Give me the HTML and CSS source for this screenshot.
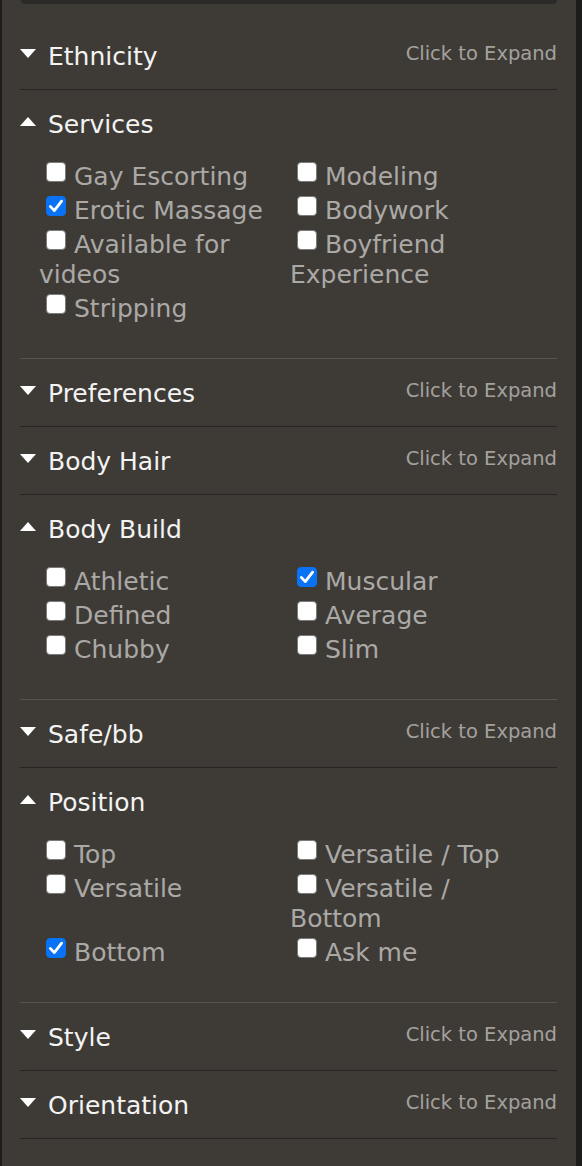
FILE: index.html
```html
<!DOCTYPE html>
<html lang="en">
<head>
<meta charset="utf-8">
<title>Filters</title>
<link rel="stylesheet" href="styles.css">
</head>
<body>
<div class="page">
  <div class="panel">
    <div class="topbar"></div>
    <div class="filters">

      <div class="section">
        <div class="head"><div class="title"><span class="tri down"></span>Ethnicity</div><div class="hint">Click to Expand</div></div>
      </div>

      <div class="section open">
        <div class="head"><div class="title"><span class="tri up"></span>Services</div></div>
        <div class="body">
          <div class="grid">
            <label><span class="cb"></span>Gay Escorting</label>
            <label><span class="cb"></span>Modeling</label>
            <label><span class="cb on"><svg viewBox="0 0 20 20"><path d="M4.3 10.4 L8.3 14.6 L15.6 5.2"/></svg></span>Erotic Massage</label>
            <label><span class="cb"></span>Bodywork</label>
            <label><span class="cb"></span>Available for videos</label>
            <label><span class="cb"></span>Boyfriend Experience</label>
            <label><span class="cb"></span>Stripping</label>
          </div>
        </div>
      </div>

      <div class="section">
        <div class="head"><div class="title"><span class="tri down"></span>Preferences</div><div class="hint">Click to Expand</div></div>
      </div>

      <div class="section">
        <div class="head"><div class="title"><span class="tri down"></span>Body Hair</div><div class="hint">Click to Expand</div></div>
      </div>

      <div class="section open">
        <div class="head"><div class="title"><span class="tri up"></span>Body Build</div></div>
        <div class="body">
          <div class="grid">
            <label><span class="cb"></span>Athletic</label>
            <label><span class="cb on"><svg viewBox="0 0 20 20"><path d="M4.3 10.4 L8.3 14.6 L15.6 5.2"/></svg></span>Muscular</label>
            <label><span class="cb"></span>Defined</label>
            <label><span class="cb"></span>Average</label>
            <label><span class="cb"></span>Chubby</label>
            <label><span class="cb"></span>Slim</label>
          </div>
        </div>
      </div>

      <div class="section">
        <div class="head"><div class="title"><span class="tri down"></span>Safe/bb</div><div class="hint">Click to Expand</div></div>
      </div>

      <div class="section open">
        <div class="head"><div class="title"><span class="tri up"></span>Position</div></div>
        <div class="body">
          <div class="grid">
            <label><span class="cb"></span>Top</label>
            <label><span class="cb"></span>Versatile / Top</label>
            <label><span class="cb"></span>Versatile</label>
            <label><span class="cb"></span>Versatile / Bottom</label>
            <label><span class="cb on"><svg viewBox="0 0 20 20"><path d="M4.3 10.4 L8.3 14.6 L15.6 5.2"/></svg></span>Bottom</label>
            <label><span class="cb"></span>Ask me</label>
          </div>
        </div>
      </div>

      <div class="section">
        <div class="head"><div class="title"><span class="tri down"></span>Style</div><div class="hint">Click to Expand</div></div>
      </div>

      <div class="section">
        <div class="head"><div class="title"><span class="tri down"></span>Orientation</div><div class="hint">Click to Expand</div></div>
      </div>

    </div>
  </div>
</div>
</body>
</html>
```

FILE: styles.css
```css
html, body {
  margin: 0;
  padding: 0;
  background: #1c1c1b;
}

.page {
  display: flex;
  min-height: 1166px;
}

.panel {
  margin-left: 2px;
  width: 574px;
  min-height: 1166px;
  background: #3e3b37;
  font-family: "DejaVu Sans", Verdana, sans-serif;
}

.topbar {
  margin: 0 19px 0 19px;
  height: 4px;
  background: #2b2a28;
  border-radius: 0 0 6px 6px;
}

.filters {
  padding: 18px 19px 0 18px;
}

.section {
  border-bottom: 1px solid #272523;
}

.section.open {
  border-bottom-color: #57544f;
}

.head {
  box-sizing: border-box;
  height: 67px;
  padding-top: 2px;
  display: flex;
  align-items: center;
  justify-content: space-between;
}

.title {
  display: flex;
  align-items: center;
  font-size: 25px;
  color: #f3f3f3;
  line-height: 30px;
}

.tri {
  display: inline-block;
  width: 0;
  height: 0;
  border-left: 8px solid transparent;
  border-right: 8px solid transparent;
  margin-right: 12px;
  position: relative;
  top: -3px;
}

.tri.down {
  border-top: 9px solid #ffffff;
}

.tri.up {
  border-bottom: 9px solid #ffffff;
}

.hint {
  font-size: 19.5px;
  color: #a3a19e;
  position: relative;
  top: -3px;
}

.body {
  padding: 5px 16px 34px 19px;
}

.grid {
  display: grid;
  grid-template-columns: 1fr 1fr;
  row-gap: 4px;
}

.grid label {
  display: block;
  font-size: 25px;
  line-height: 30px;
  color: #aba9a6;
}

.cb {
  display: inline-block;
  box-sizing: border-box;
  width: 20px;
  height: 20px;
  margin: 0 8px 0 7px;
  background: #ffffff;
  border: 1.5px solid #7b7b7b;
  border-radius: 4px;
  vertical-align: 3px;
}

.cb.on {
  background: #0a72f5;
  border-color: #0a72f5;
}

.cb svg {
  display: block;
  width: 20px;
  height: 20px;
  margin: -1.5px;
}

.cb svg path {
  fill: none;
  stroke: #ffffff;
  stroke-width: 2.8;
  stroke-linecap: round;
  stroke-linejoin: round;
}
```
